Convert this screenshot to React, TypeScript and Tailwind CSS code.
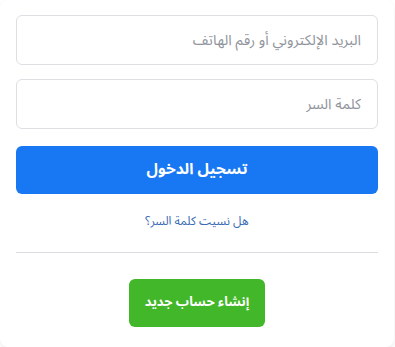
import React from 'react';

export default function App() {
    return (
        <div className="min-h-screen bg-white" style={{ fontFamily: '"Noto Sans Arabic", "DejaVu Sans", sans-serif' }}>
            <div dir="rtl" className="w-[394px] bg-white rounded-lg shadow-[0_1px_3px_rgba(0,0,0,0.05),0_6px_12px_rgba(0,0,0,0.04)] px-4 pt-[15px] pb-5">
                <form className="flex flex-col" onSubmit={(e) => e.preventDefault()}>
                    <input
                        type="text"
                        placeholder="البريد الإلكتروني أو رقم الهاتف"
                        className="h-[50px] w-full rounded-md border border-[#dddfe2] px-4 text-[14.5px] text-[#1d2129] placeholder:text-[#90949c] outline-none"
                    />
                    <input
                        type="password"
                        placeholder="كلمة السر"
                        className="mt-[14px] h-[50px] w-full rounded-md border border-[#dddfe2] px-4 text-[14.5px] text-[#1d2129] placeholder:text-[#90949c] outline-none"
                    />
                    <button
                        type="submit"
                        className="mt-[17px] h-12 w-full rounded-md bg-[#1877f2] text-[15.5px] font-bold text-white"
                    >
                        تسجيل الدخول
                    </button>
                    <a href="#" className="mt-[18px] self-center text-[12px] leading-5 text-[#3b6bb5]">
                        هل نسيت كلمة السر؟
                    </a>
                    <div className="mt-[20px] h-px w-full bg-[#dadde1]" />
                    <div className="mt-[26px] flex justify-center">
                        <button
                            type="button"
                            className="h-12 w-[136px] whitespace-nowrap rounded-md bg-[#42b72a] text-[13px] font-bold text-white"
                        >
                            إنشاء حساب جديد
                        </button>
                    </div>
                </form>
            </div>
        </div>
    );
}
